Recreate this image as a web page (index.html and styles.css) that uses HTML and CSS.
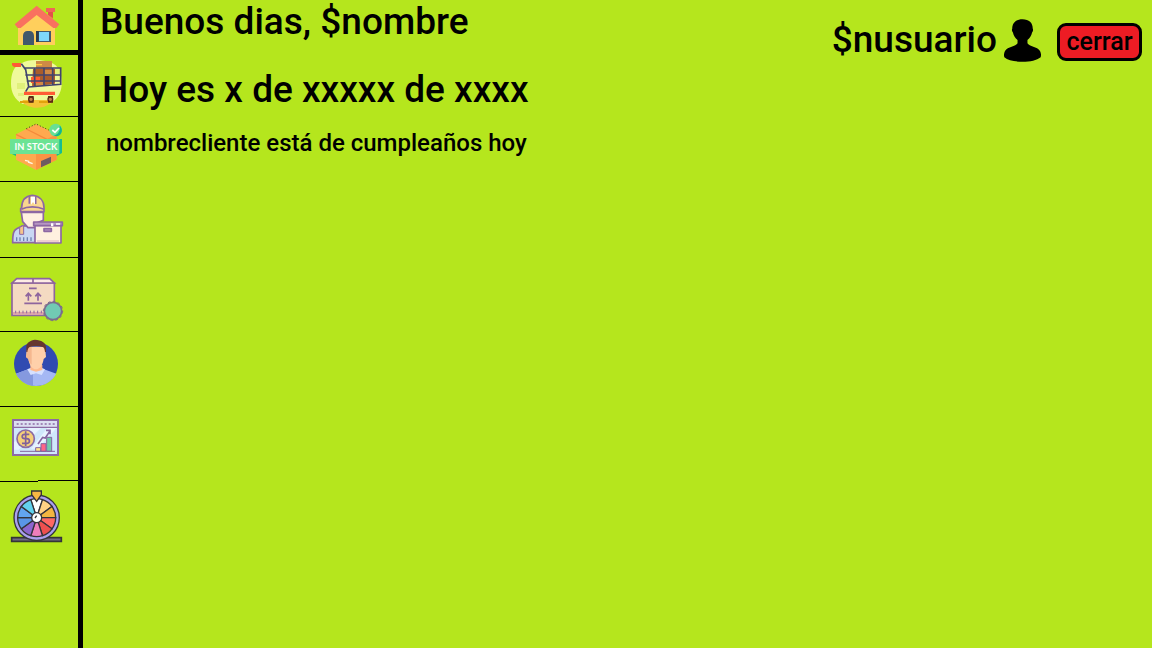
FILE: index.html
```html
<!DOCTYPE html>
<html lang="es">
<head>
<meta charset="utf-8">
<title>Inicio</title>
<meta name="viewport" content="width=device-width, initial-scale=1">
<link rel="stylesheet" href="styles.css">
</head>
<body>
<div class="app">
  <nav class="sidebar" aria-label="Principal">
    <a class="nav-item nav-home" href="#inicio" aria-label="Inicio">
      <svg viewBox="0 0 234 150">
        <path fill="#ffcf5c" d="M54 80 110 34l55 46v55H54z"/>
        <path fill="#ef6657" d="M138 24h27v12h-6v20l-15-12v-8h-6z"/>
        <path fill="#e2504a" d="M144 36h15v18l-15-10z"/>
        <path fill="#f9715f" d="M110 17l68 56-9 11h-9L110 45 62 84h-9l-9-11z"/>
        <path fill="#43586b" d="M69 135v-28c0-9 6-14 13-14h7c7 0 13 5 13 14v28zM108 93h45v33h-45z"/>
        <path fill="#7fd7fb" d="M117 96h30v27h-30z"/>
        <path fill="#2b3b4c" d="M108 93h8v33h-8z"/>
      </svg>
    </a>
    <a class="nav-item" href="#ventas" aria-label="Ventas">
      <svg viewBox="0 15 234 183">
        <path fill="#eff99b" d="M66 39c15-10 54-12 78-3 33 4 43 38 41 69-2 24-12 42-36 57H68C44 150 33 126 33 102c0-31 8-55 33-63z"/>
        <path fill="#e0f07a" d="M51 99h24v18H51zM54 129h18v9H54zM162 54h18v18h-18z"/>
        <path fill="#f5c236" d="M68 150h94c-14 17-34 24-54 23-15 0-30-7-40-15z"/>
        <path fill="#e2a20c" d="M60 153h39v6H60zM117 153h41v6h-41z"/>
        <path fill="#cf8a45" d="M108 33h48v27h-48z"/><path fill="#ffc93d" d="M108 42h18v4h-18z"/>
        <path fill="#a95c2b" d="M99 57h66v44l-69 9z"/><path fill="#cf8a45" d="M132 60h24v14h-24zM108 96h22v12h-22z"/>
        <path fill="#ff5a30" d="M93 81h27v18H93z"/>
        <path fill="none" stroke="#41446e" stroke-width="5" d="M64 41l13 18 9 51-9 15M72 54h110v49L86 111M76 75h106M80 93h102M104 54v55M132 54v52M158 54v50"/>
        <path fill="#ff5b34" d="M36 39h27v12H42l-6-5zM72 125h93v10H72z"/>
        <path fill="#5b2b16" d="M86 138h15v20H86zM144 138h15v20h-15z"/>
        <circle cx="93" cy="148" r="7" fill="#c0814b" stroke="#5b2b16" stroke-width="4"/>
        <circle cx="151" cy="148" r="7" fill="#c0814b" stroke="#5b2b16" stroke-width="4"/>
      </svg>
    </a>
    <a class="nav-item" href="#stock" aria-label="Stock">
      <svg viewBox="0 6 234 192">
        <path fill="#ffa94f" d="M108 27l62 31v76l-62 31-60-31V58z"/>
        <path fill="#fb9343" d="M108 88l62-30v76l-62 31z"/>
        <path fill="none" stroke="#f58a3b" stroke-width="4" d="M48 58l60 30M79 42l62 31"/>
        <path fill="none" stroke="#3b3b20" stroke-width="3" stroke-dasharray="3 6" d="M79 41l29-14 38 18"/>
        <path fill="#16bd91" d="M30 114l18 9v-9zM170 72h16v42l-16 9z"/>
        <path fill="#6be394" d="M30 72h148v45H30z"/>
        <text class="stock-label" x="108" y="105" text-anchor="middle">IN STOCK</text>
        <path fill="#6d5b61" d="M123 138l30-13v18l-30 14z"/>
        <path fill="none" stroke="#fff6e5" stroke-width="4" d="M75 136l13 3M84 141l14 5"/>
        <circle cx="167" cy="45" r="19" fill="#69df94"/><path fill="#14b78c" d="M179 31c11 11 9 30-9 33l-9-2c15-3 20-15 18-31z"/>
        <path fill="none" stroke="#fff" stroke-width="5" d="M157 45l8 7 12-13"/>
      </svg>
    </a>
    <a class="nav-item" href="#proveedores" aria-label="Proveedores">
      <svg viewBox="0 6 234 225">
        <g stroke="#8d67a3" stroke-width="5" stroke-linejoin="round">
          <path fill="#c9d7f3" d="M68 137l-18 9c-9 5-12 14-12 42h69v-47z"/>
          <path fill="#f5c48c" stroke-width="3" d="M59 142l12-6v27H59z"/>
          <path fill="#fff0e1" d="M64 97h66v24l-21 8-3 14H84l-16-18z"/>
          <path fill="#f9d58e" d="M65 83c0-22 12-35 32-37 23 2 35 17 35 37v12H62V85z"/>
          <path fill="#fbe7bc" d="M88 48v23M107 50v22"/>
          <path fill="none" d="M64 88c18-10 48-10 68 0"/>
          <path fill="#fff0df" d="M105 136h78v53h-78z"/>
          <path fill="#b697c2" d="M101 126h86v11h-86z"/>
          <path fill="#b697c2" d="M132 146h22v8h-22z"/>
        </g>
        <path fill="#fff" d="M93 50h12v24l-6-8-6 8zM153 130h7v9h-7zM168 130h12v4h-12z"/>
        <path stroke="#6e83b4" stroke-width="4" d="M50 172v11M60 172v11M71 172v11M82 172v11M93 172v11"/>
        <path fill="#e6bfc8" d="M111 181h66v4h-66z"/>
      </svg>
    </a>
    <a class="nav-item" href="#productos" aria-label="Productos">
      <svg viewBox="0 6 234 219">
        <path fill="#f4dac2" stroke="#8e659e" stroke-width="5" d="M36 81h127v97H36z"/>
        <path fill="#fdebe4" stroke="#8e659e" stroke-width="5" d="M36 81l14-13h99l14 13z"/>
        <path fill="#dfa7aa" d="M39 168h120v8H39z"/>
        <path fill="none" stroke="#8e659e" stroke-width="5" d="M99 68v13M87 97h23M73 142h53M85 134v-21M114 134v-21M77 121l8-9 9 9M106 121l8-9 9 9"/>
        <path fill="none" stroke="#8e659e" stroke-width="3" d="M47 164v8M58 164v8M69 164v8M80 164v8M91 164v8M102 164v8M113 164v8M124 164v8"/>
        <circle cx="159" cy="165" r="26" fill="#71cab3" stroke="#7b6b8e" stroke-width="5"/>
        <circle cx="159" cy="165" r="29" fill="none" stroke="#7b6b8e" stroke-width="3" stroke-dasharray="8 7"/>
      </svg>
    </a>
    <a class="nav-item" href="#clientes" aria-label="Clientes">
      <svg viewBox="0 6 234 222">
        <circle cx="108" cy="102" r="66" fill="#304bb1"/>
        <path fill="#a5b8f4" d="M48 131l36-13h48l37 13c-13 23-35 37-61 37s-48-14-60-37z"/>
        <path fill="#8599df" d="M48 131l36-13 15 10v39c-23-3-41-16-51-36z"/>
        <path fill="#d6e0ff" d="M82 118l9-4h35l9 4-10 17-17-5-16 5z"/>
        <path fill="#ffb98c" d="M91 105h36v15l-19 5-17-5z"/>
        <path fill="#ffd0aa" d="M82 50h53l3 31-7 6c-3 19-12 31-23 31s-20-12-23-31l-7-6z"/>
        <path fill="#f5b88f" d="M82 50h13v54c-6-4-9-11-10-17l-7-6z"/>
        <path fill="#66362f" d="M79 66V49c1-11 12-18 26-20 19 1 33 9 33 23v14h-3c-1-9-3-14-7-15-12-4-27-4-39 0-4 2-6 7-7 15z"/>
      </svg>
    </a>
    <a class="nav-item nav-reports" href="#reportes" aria-label="Reportes">
      <svg viewBox="0 9 234 225">
        <path fill="#cfe7fb" stroke="#8d6ba5" stroke-width="6" d="M39 48h135v105H39z"/>
        <path fill="#dcdff2" d="M42 51h129v18H42z"/>
        <path fill="#e7f3ff" d="M87 72h36l-67 65H42v-22zM142 72h28l-57 62h-20z"/>
        <path fill="none" stroke="#8d6ba5" stroke-width="4" d="M42 70h129"/>
        <path fill="none" stroke="#8d6ba5" stroke-width="5" stroke-dasharray="6 6" d="M50 60h117"/>
        <circle cx="77" cy="104" r="26" fill="#f5cf79" stroke="#8b6ba4" stroke-width="5"/>
        <path fill="none" stroke="#80609b" stroke-width="5" d="M88 91H74c-10 0-10 13 0 13h6c11 0 11 14 0 14H66M77 82v44"/>
        <path fill="none" stroke="#8564a1" stroke-width="5" d="M114 120l14-20 8 2 13-20M138 79h12v12"/>
        <g stroke="#8564a1" stroke-width="3"><path fill="#ffe385" d="M107 131h15v11h-15z"/><path fill="#ff6586" d="M123 119h15v23h-15z"/><path fill="#72cbaa" d="M140 100h15v42h-15z"/></g>
        <path stroke="#8564a1" stroke-width="3" d="M60 142h105"/>
        <path fill="none" stroke="#000" stroke-width="3" d="M0 232.5h114M114 229.500h120"/>
      </svg>
    </a>
    <a class="nav-item nav-last" href="#ruleta" aria-label="Ruleta">
      <svg viewBox="0 12 234 210">
        <path fill="#706a85" stroke="#343438" stroke-width="5" d="M35 179h149v11H35z"/>
        <circle cx="110" cy="119" r="63" fill="none" stroke="#34343b" stroke-width="14"/>
        <circle cx="110" cy="119" r="62" fill="#aaa0ee" stroke="#aaa0ee" stroke-width="8"/>
        <g transform="translate(110 119)" stroke="#34343b" stroke-width="4">
          <path fill="#fff" d="M0 0-17.600-54.200Q0-60 17.600-54.200z"/>
          <path fill="#ffd184" d="M0 0 17.600-54.200Q36-48 46-33.500z"/>
          <path fill="#f3b540" d="M0 0 46-33.500Q57-18 57 0z"/>
          <path fill="#ff6863" d="M0 0H57Q57 18 46 33.500z"/>
          <path fill="#ed504f" d="M0 0 46 33.500Q36 48 17.600 54.200z"/>
          <path fill="#ee7eba" d="M0 0 17.600 54.200Q0 60-17.600 54.200z"/>
          <path fill="#8d66cf" d="M0 0-17.600 54.200Q-36 48-46 33.500z"/>
          <path fill="#5a96e7" d="M0 0-46 33.500Q-57 18-57 0z"/>
          <path fill="#62a5ef" d="M0 0H-57Q-57-18-46-33.500z"/>
          <path fill="#62d2ed" d="M0 0-46-33.500Q-36-48-17.600-54.200z"/>
          <circle r="15" fill="#fff"/>
          <path fill="none" d="M-5 1l5-7"/>
        </g>
        <path fill="#f7b744" stroke="#343438" stroke-width="4" d="M95 39h29v11l-14 20-15-20z"/>
      </svg>
    </a>
  </nav>
  <main class="content">
    <section class="greeting">
      <h1 class="title">Buenos dias, $nombre</h1>
      <p class="title date">Hoy es x de xxxxx de xxxx</p>
      <p class="notice">nombrecliente está de cumpleaños hoy</p>
    </section>
    <header class="account">
      <span class="title">$nusuario</span>
      <svg class="avatar" viewBox="0 0 112 129" aria-hidden="true">
        <path d="M56 0c20 0 31 11 31 28 2 4 1 9-2 12-2 10-7 17-14 23v10c5 10 30 10 38 23 3 6 4 12 2 19-12 9-31 14-55 14s-44-5-55-14c-2-7-1-13 2-19 8-13 33-13 38-23V63c-7-6-12-13-14-23-3-3-4-8-2-12C25 11 36 0 56 0z"/>
      </svg>
      <button class="logout" type="button">cerrar</button>
    </header>
  </main>
</div>
</body>
</html>
```

FILE: styles.css
```css
* {
  box-sizing: border-box;
}

body {
  margin: 0;
  background: #b5e61d;
  color: #000;
  font-family: Bahnschrift, Roboto, sans-serif;
  font-weight: 500;
}

.app {
  display: flex;
  min-height: 100vh;
}

.sidebar {
  flex: none;
  width: 83px;
  border-right: 5px solid #000;
}

.nav-item {
  display: block;
  border-bottom: 1px solid #000;
}

.nav-item svg {
  display: block;
  width: 100%;
}

.nav-home {
  border-bottom-width: 5px;
}

.nav-reports,
.nav-last {
  border-bottom: 0;
}

.stock-label {
  fill: #fff;
  font-family: Lato, sans-serif;
  font-size: 28px;
  font-weight: 700;
}

.content {
  flex: 1;
  display: flex;
  justify-content: space-between;
  align-items: flex-start;
}

.greeting {
  padding-left: 17px;
}

.title {
  margin: 0;
  font-size: 37px;
  font-weight: 500;
  line-height: 44px;
}

.date {
  margin-top: 24px;
  padding-left: 2px;
}

.notice {
  margin: 16px 0 0;
  padding-left: 6px;
  font-size: 24px;
  line-height: 30px;
}

.account {
  display: flex;
  align-items: center;
  padding: 18px 10px 0 0;
}

.avatar {
  width: 37px;
  height: 43px;
  margin: 0 16px 0 7px;
}

.logout {
  width: 85px;
  height: 38px;
  margin-top: 4px;
  padding: 0;
  border: 3px solid #000;
  border-radius: 9px;
  background: #ed1c24;
  color: #000;
  font: inherit;
  font-size: 25px;
  line-height: 30px;
}
```
